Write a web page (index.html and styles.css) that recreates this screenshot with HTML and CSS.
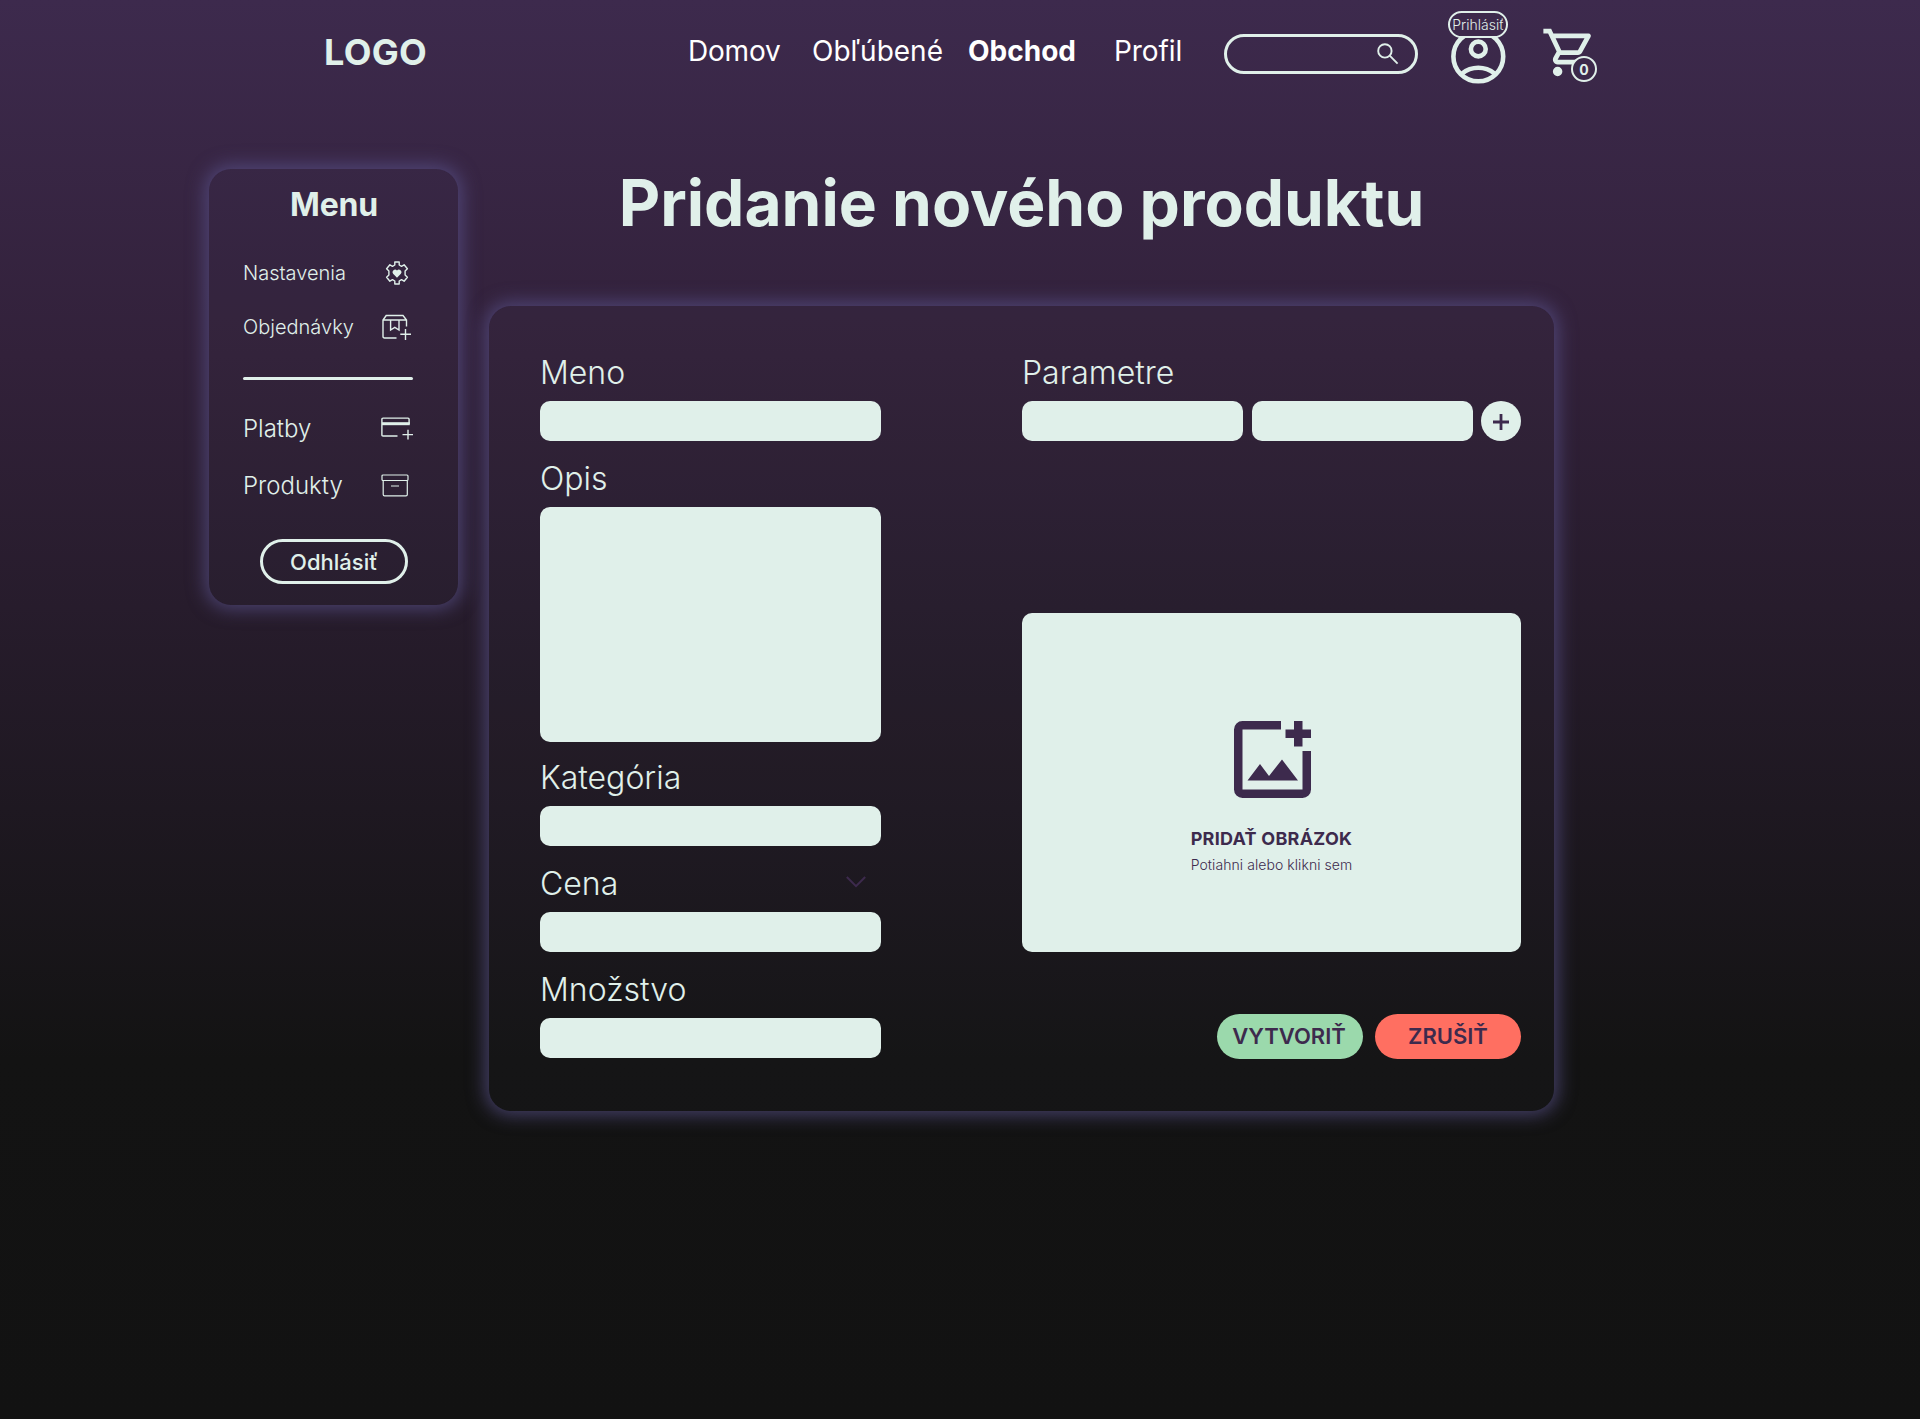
FILE: index.html
```html
<!DOCTYPE html>
<html lang="sk">
<head>
<meta charset="utf-8">
<title>Pridanie nového produktu</title>
<link rel="stylesheet" href="styles.css">
</head>
<body>
<header class="header">
  <a class="logo">LOGO</a>
  <nav class="nav">
    <a class="nav-home">Domov</a>
    <a class="nav-favourites">Obľúbené</a>
    <a class="nav-shop active">Obchod</a>
    <a class="nav-profile">Profil</a>
  </nav>
  <div class="search">
    <svg width="22" height="22" viewBox="0 0 22 22" fill="none" stroke="currentColor" stroke-width="1.9"><circle cx="7.9" cy="7.9" r="6.7"/><path d="M12.7 12.7 20.6 20.6"/></svg>
  </div>
  <div class="account">
    <svg width="56" height="56" viewBox="0 0 56 56" fill="none" stroke="currentColor" stroke-width="4.6"><circle cx="28.300" cy="28.400" r="24.9"/><circle cx="28.300" cy="21" r="7.4"/><path d="M11.800 45.7Q19.300 39.8 28.300 39.8T44.800 45.7"/></svg>
    <span class="login">Prihlásiť</span>
  </div>
  <div class="cart">
    <svg width="57" height="57" viewBox="0 0 24 24" fill="currentColor"><path d="M15.55 13c.75 0 1.41-.41 1.75-1.03l3.58-6.49c.37-.66-.11-1.48-.87-1.48H5.21l-.94-2H1v2h2l3.6 7.59-1.35 2.44C4.52 15.37 5.48 17 7 17h12v-2H7l1.1-2h7.45zM6.16 6h12.15l-2.76 5H8.53L6.16 6zM7 18a2 2 0 1 0 0 4 2 2 0 0 0 0-4z"/></svg>
    <span class="count">0</span>
  </div>
</header>
<div class="page">
  <aside class="panel menu">
    <h2>Menu</h2>
    <a class="item settings"><span>Nastavenia</span>
      <svg width="24" height="24" viewBox="0 0 24 24" fill="none" stroke="currentColor" stroke-width="1.4" stroke-linejoin="round"><path d="M9.800 1h4.400v3l2.300 1.300 2.600-1.500 3.300 4-2.300 2.200v4l2.300 2.200-3.300 4-2.600-1.500-2.300 1.300v3H9.800v-3l-2.300-1.300-2.600 1.500-3.300-4 2.300-2.200v-4L1.600 7.800l3.300-4 2.600 1.500L9.800 4z"/><path fill="currentColor" stroke="none" d="M12 16.800 8.100 12.800a2.500 2.500 0 0 1 3.900-3.200 2.500 2.500 0 0 1 3.900 3.200z"/></svg>
    </a>
    <a class="item orders"><span>Objednávky</span>
      <svg width="29" height="26" viewBox="0 0 29 26" fill="none" stroke="currentColor" stroke-width="1.4"><path d="M14.500 24H2.500Q1 24 1 22.500V6l3.200-4.500H21L24.500 6V12.500M1 6H24.500M8.600 6V16l4.200-2.600L17 16V6M18.300 20.300H29M23.500 15V26"/></svg>
    </a>
    <div class="rule"></div>
    <a class="item payments"><span>Platby</span>
      <svg width="32" height="23" viewBox="0 0 32 23" fill="none" stroke="currentColor" stroke-width="1.4"><path d="M16.500 19H2Q.9 19 .9 18V2.200Q.9 1.100 2 1.100H27Q28.100 1.100 28.100 2.200V7"/><path stroke-width="3" d="M1 6.700H28.800"/><path d="M21.500 17.600H32M27 12.800V22.500"/></svg>
    </a>
    <a class="item products"><span>Produkty</span>
      <svg width="28" height="23" viewBox="0 0 28 23" fill="none" stroke="currentColor" stroke-width="1.200"><rect x="1" y="1" width="26" height="5.500" rx="1"/><path d="M2.200 6.500V20.500Q2.200 21.800 3.500 21.800H25Q26.300 21.800 26.300 20.500V6.500M10 12H18"/></svg>
    </a>
    <button class="logout">Odhlásiť</button>
  </aside>
  <main class="content">
    <h1>Pridanie nového produktu</h1>
    <form class="panel form">
      <div class="col-left">
        <label>Meno</label>
        <div class="field"></div>
        <label>Opis</label>
        <div class="field area"></div>
        <label class="category">Kategória</label>
        <div class="field"></div>
        <div class="label-row"><label>Cena</label>
          <svg width="20" height="12" viewBox="0 0 20 12" fill="none" stroke="currentColor" stroke-width="2"><path d="M.8 1 10 10.200 19.200 1"/></svg>
        </div>
        <div class="field"></div>
        <label>Množstvo</label>
        <div class="field"></div>
      </div>
      <div class="col-right">
        <label>Parametre</label>
        <div class="params">
          <div class="field"></div>
          <div class="field"></div>
          <div class="plus"><svg width="16" height="16" viewBox="0 0 16 16" stroke="currentColor" stroke-width="2.800"><path d="M0 8H16M8 0V16"/></svg></div>
        </div>
        <div class="dropzone">
          <svg width="77" height="77" viewBox="0 0 77 77" fill="currentColor"><path d="M47 0H8.500A8.500 8.500 0 0 0 0 8.500V68.500A8.500 8.500 0 0 0 8.500 77H68.500A8.500 8.500 0 0 0 77 68.500V30H68.500V68.500H8.500V8.500H47zM60 0H68.500V8.500H77V17H68.500V25.500H60V17H51.500V8.500H60zM13.500 59.500 26 43 35 55 48 38.500 64 59.500z"/></svg>
          <strong>PRIDAŤ OBRÁZOK</strong>
          <span>Potiahni alebo klikni sem</span>
        </div>
        <div class="actions">
          <button class="create">VYTVORIŤ</button>
          <button class="cancel">ZRUŠIŤ</button>
        </div>
      </div>
    </form>
  </main>
</div>
</body>
</html>
```
FILE: styles.css
```css
* { box-sizing: border-box; }
body {
  margin: 0;
  min-height: 1419px;
  font-family: Inter, "Liberation Sans", sans-serif;
  color: #e0f0ea;
  background: linear-gradient(180deg, #3d2a4d 0, #32213a 355px, #131313 1060px, #121212 1419px);
}
h1, h2 { margin: 0; }
svg { display: block; flex: none; }
button { font-family: inherit; padding: 0; border: 0; }

.header { display: flex; height: 103px; padding-left: 324px; }
.logo { width: 364px; font-size: 36px; font-weight: 700; line-height: 104px; letter-spacing: .3px; }
.nav { display: flex; width: 536px; font-size: 28px; line-height: 103px; color: #fff; font-weight: 400; white-space: nowrap; }
.nav-home { width: 124px; letter-spacing: -.2px; }
.nav-favourites { width: 156px; }
.nav-shop { width: 146px; }
.active { font-weight: 700; }
.nav-profile { letter-spacing: -.1px; }
.search {
  display: flex; justify-content: flex-end; align-items: center;
  width: 194px; height: 40px; margin-top: 33.5px; padding-right: 16px;
  border: 3px solid; border-radius: 20px;
}
.account { position: relative; margin: 28px 0 0 32px; width: 60px; }
.login {
  position: absolute; left: -2px; top: -17px; width: 60px; height: 27px;
  border: 2px solid; border-radius: 14px; background: #3d2a4c;
  font-size: 14px; font-weight: 300; line-height: 23px; text-align: center;
}
.cart { position: relative; margin: 24px 0 0 31px; width: 57px; }
.count {
  position: absolute; left: 30px; top: 32px; width: 26px; height: 26px;
  border: 2px solid; border-radius: 50%; background: #3b294a;
  font-size: 14px; font-weight: 700; line-height: 23px; text-align: center;
}

.page { display: flex; align-items: flex-start; gap: 31px; padding: 66px 0 0 209px; }
.panel {
  border-radius: 22px;
  background: rgba(60, 60, 80, .06);
  box-shadow: 0 0 18px 4px rgba(90, 82, 140, .7);
}
.menu { width: 249px; height: 436px; padding: 0 45px 0 34px; }
.menu h2 { padding-left: 12px; text-align: center; font-size: 32px; line-height: 71px; letter-spacing: -.2px; }
.item { display: flex; justify-content: space-between; align-items: center; height: 54px; font-size: 20px; font-weight: 300; }
.settings { margin-top: 6px; padding-right: 4px; }
.orders { padding-right: 2px; }
.rule { height: 3px; margin: 23px 0 0; border-radius: 2px; background: #e0f0ea; }
.payments, .products { height: 57px; font-size: 24px; }
.payments { margin-top: 20px; }
.products { padding-right: 4px; }
.logout {
  display: block; width: 148px; height: 45px; margin: 25px 0 0 17px;
  border: 3px solid #e0f0ea; border-radius: 23px;
  background: none; color: #e0f0ea; font-size: 22px; font-weight: 500;
}
.content { width: 1065px; }
.content h1 { height: 137px; font-size: 64px; font-weight: 700; line-height: 67px; text-align: center; }

.form { display: flex; justify-content: space-between; height: 805px; padding: 38px 33px 0 51px; }
.form label { display: block; font-size: 32px; font-weight: 300; line-height: 57px; }
.col-left { width: 341px; }
.col-left .field + label { padding-top: 9px; }
.col-left .field + .category { padding-top: 7px; }
.label-row { display: flex; justify-content: space-between; padding: 9px 15px 0 0; color: #3d2a4d; }
.label-row label { color: #e0f0ea; }
.label-row svg { margin-top: 21px; }
.field { height: 40px; border-radius: 10px; background: #e0f0ea; }
.area { height: 235px; }
.col-right { width: 499px; }
.params { display: flex; gap: 9px; }
.params .field { width: 221px; }
.plus { display: flex; align-items: center; justify-content: center; width: 40px; height: 40px; margin-left: -1px; border-radius: 50%; background: #e0f0ea; color: #3d2a4d; }
.plus svg { margin-top: 2px; }
.dropzone {
  display: flex; flex-direction: column; align-items: center;
  height: 339px; margin-top: 172px; padding-top: 107.500px;
  border-radius: 10px; background: #e0f0ea; color: #3d2a4d;
}
.dropzone svg { margin-left: 1px; }
.dropzone strong { margin-top: 27px; font-size: 18px; line-height: 27px; letter-spacing: .25px; }
.dropzone span { font-size: 14px; font-weight: 300; line-height: 25px; letter-spacing: .07px; }
.actions { display: flex; justify-content: flex-end; gap: 12px; margin-top: 62px; }
.actions button { width: 146px; height: 44.500px; border-radius: 23px; color: #3d2a4d; font-size: 22px; font-weight: 600; }
.create { padding-right: 2px; background: #9bd9ac; }
.actions .cancel { background: #ff6f61; }
```
